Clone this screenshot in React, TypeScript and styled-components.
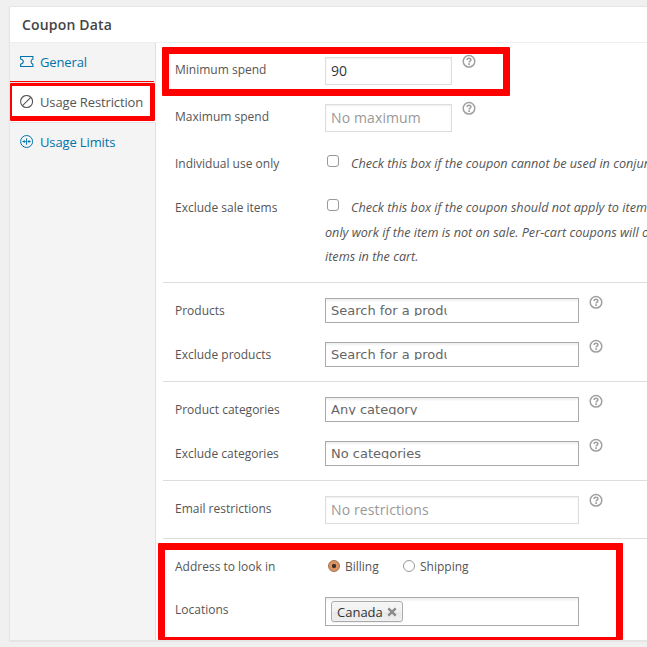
import React from "react";
import styled, { createGlobalStyle, css } from "styled-components";

const GlobalStyle = createGlobalStyle`
  *, *::before, *::after { box-sizing: border-box; }
  html, body { margin: 0; overflow: hidden; background: #f0f0f0; }
  body { font-family: "Open Sans", sans-serif; font-size: 12px; color: #555; }
`;

const Page = styled.div`
  height: 647px;
  width: 647px;
  padding: 6px 0 0 9px;
  overflow: hidden;
  position: relative;
`;

const Panel = styled.section`
  width: 700px;
  height: 635px;
  display: flex;
  flex-direction: column;
  background: #fff;
  border: 1px solid #e5e5e5;
  box-shadow: 0 1px 1px rgba(0, 0, 0, 0.04);
`;

const PanelHeader = styled.h2`
  margin: 0;
  height: 36px;
  padding-left: 12px;
  flex: none;
  border-bottom: 1px solid #eee;
  font-size: 14px;
  font-weight: 600;
  letter-spacing: 0.17px;
  line-height: 35px;
  color: #444;
`;

const PanelBody = styled.div`
  display: flex;
  flex: 1;
  min-height: 0;
`;

const Tabs = styled.nav`
  width: 146px;
  flex: none;
  background: #f4f4f4;
  border-right: 1px solid #dfdfdf;
`;

const Tab = styled.a<{ $active?: boolean }>`
  display: flex;
  align-items: center;
  gap: 6px;
  height: 40px;
  padding: 0 0 1px 10px;
  border-bottom: 1px solid #e3e3e3;
  font-size: 13px;
  letter-spacing: -0.13px;
  white-space: nowrap;
  color: #0073aa;
  &:last-child { border-bottom-color: transparent; }
  ${(p) =>
    p.$active &&
    css`
      margin-right: -1px;
      background: #fff;
      color: #555;
    `}
  svg { flex: none; }
`;

const Options = styled.div`
  flex: 1;
  padding-left: 7px;
  overflow: hidden;
`;

const Group = styled.div<{ $height: number }>`
  height: ${(p) => p.$height}px;
  padding: 8px 0 0 12px;
  border-bottom: 1px solid #ddd;
  &:first-child { padding-top: 7px; }
  &:last-child { border-bottom: 0; }
`;

const Row = styled.div<{ $height?: number }>`
  display: grid;
  grid-template-columns: 150px 1fr;
  height: ${(p) => p.$height ?? 44}px;
  padding-top: 7px;
`;

const Label = styled.label`
  line-height: 26px;
  white-space: nowrap;
`;

const Control = styled.div`
  display: flex;
  align-items: flex-start;
`;

const TextField = styled.input<{ $wide?: boolean }>`
  width: ${(p) => (p.$wide ? 254 : 127)}px;
  height: 28px;
  margin: 0;
  padding: 0 5px 2px;
  border: 1px solid #ddd;
  outline: 0;
  background: #fff;
  box-shadow: inset 0 1px 2px rgba(0, 0, 0, 0.07);
  font: 14px "Open Sans", sans-serif;
  letter-spacing: 0.12px;
  color: #32373c;
  &::placeholder { color: #999; opacity: 1; }
`;

const SelectField = styled.div<{ $tall?: boolean }>`
  width: 254px;
  height: ${(p) => (p.$tall ? 29 : 25)}px;
  padding: 3px 5px;
  border: 1px solid #aaa;
  background: linear-gradient(#eee 1%, #fff 15%);
`;

const SelectText = styled.div<{ $clipped?: boolean }>`
  height: 14px;
  width: ${(p) => (p.$clipped ? "116px" : "auto")};
  overflow: hidden;
  white-space: nowrap;
  font: 13px/17px "DejaVu Sans", sans-serif;
  color: #666;
`;

const Chip = styled.span`
  display: inline-flex;
  align-items: center;
  justify-content: space-between;
  width: 72px;
  height: 21px;
  padding: 1px 5px 0;
  border: 1px solid #aaa;
  border-radius: 3px;
  background: linear-gradient(#f4f4f4 20%, #f0f0f0 50%, #e8e8e8 52%, #eee);
  box-shadow: 0 0 2px #fff inset, 0 1px 0 rgba(0, 0, 0, 0.05);
  font-size: 13px;
  line-height: 19px;
  color: #333;
  svg { margin-bottom: 1px; }
`;

const Notes = styled.div`
  font-size: 12.65px;
  font-style: italic;
  color: #555;
  white-space: nowrap;
`;

const NoteLine = styled.div<{ $first?: boolean }>`
  display: flex;
  height: ${(p) => (p.$first ? 25 : 24)}px;
  line-height: 25px;
`;

const Checkbox = styled.input.attrs({ type: "checkbox" })`
  appearance: none;
  flex: none;
  width: 12px;
  height: 12px;
  margin: 4px 12px 0 2px;
  border: 1px solid #999;
  border-radius: 3px;
  background: #fff;
`;

const RadioOption = styled.label`
  display: flex;
  align-items: center;
  width: 75px;
  height: 24px;
  padding-left: 3px;
  gap: 5px;
`;

const Radio = styled.span<{ $checked?: boolean }>`
  width: 12px;
  height: 12px;
  border: 1px solid ${(p) => (p.$checked ? "#a5704d" : "#999")};
  border-radius: 50%;
  background: ${(p) =>
    p.$checked ? "radial-gradient(circle, #38322f 0 1.7px, #dd9262 2.5px)" : "#fff"};
`;

const Highlight = styled.div`
  position: absolute;
  border: 7px solid #f00;
  border-radius: 1px;
  pointer-events: none;
`;

const SpendHighlight = styled(Highlight)`
  left: 162px; top: 47px; width: 348px; height: 49px;
`;

const TabHighlight = styled(Highlight)`
  left: 10px; top: 83px; width: 145px; height: 38px;
  border-width: 3px 5px 5px 2px;
  &::before {
    content: "";
    position: absolute;
    left: -2px; top: -5px; width: 144px; height: 1px;
    background: #f00;
  }
`;

const LocationHighlight = styled(Highlight)`
  left: 158px; top: 543px; width: 465px; height: 97px;
  border-bottom-width: 3px;
`;

const HelpSvg = styled.svg`
  display: block;
  flex: none;
  margin: -3px 0 0 10px;
`;

const Help = () => (
  <HelpSvg width="14" height="14" viewBox="0 0 14 14" fill="none" stroke="#a0a0a0">
    <circle cx="7" cy="7.3" r="5.8" strokeWidth="1.5" />
    <path d="M5.1 6C5.1 3.7 8.9 3.7 8.9 5.8C8.9 7.1 7.1 7 7.1 8.4" strokeWidth="1.6" />
    <path d="M7.1 9.3v1.6" strokeWidth="1.7" />
  </HelpSvg>
);

const TicketIcon = () => (
  <svg width="14" height="14" viewBox="0 0 14 14" fill="none" stroke="currentColor" strokeWidth="1.1">
    <path d="M.6 1.5H12.9V4C10.4 4.8 10.4 8.4 12.9 9.2V11.5H.6V9.2C4.2 8.4 4.2 4.8 .6 4Z" />
  </svg>
);

const BlockIcon = () => (
  <svg width="14" height="14" viewBox="0 0 14 14" fill="none" stroke="currentColor" strokeWidth="1.1">
    <circle cx="6.6" cy="6.5" r="6" />
    <path d="M2.5 10.7L10.8 2.4" />
  </svg>
);

const LimitsIcon = () => (
  <svg width="14" height="14" viewBox="0 0 14 14" fill="none" stroke="currentColor" strokeWidth="1">
    <circle cx="6.6" cy="6.5" r="6" />
    <path d="M6.6 3.3v6.4M2.5 6.5h3M7.7 6.5h3" />
    <path d="M3.8 4.8L5.6 6.5L3.8 8.2ZM9.4 4.8L7.6 6.5L9.4 8.2Z" fill="currentColor" stroke="none" />
  </svg>
);

const RemoveIcon = () => (
  <svg width="10" height="10" viewBox="0 0 10 10" stroke="#8a8a8a" strokeWidth="2.4">
    <path d="M1.3 1.3L8.7 8.7M8.7 1.3L1.3 8.7" />
  </svg>
);

type SelectRowProps = { label: string; text: string; clipped?: boolean };

const SelectRow = ({ label, text, clipped }: SelectRowProps) => (
  <Row>
    <Label>{label}</Label>
    <Control>
      <SelectField>
        <SelectText $clipped={clipped}>{text}</SelectText>
      </SelectField>
      <Help />
    </Control>
  </Row>
);

export default function App() {
  return (
    <>
      <GlobalStyle />
      <Page>
        <Panel>
          <PanelHeader>Coupon Data</PanelHeader>
          <PanelBody>
            <Tabs>
              <Tab><TicketIcon />General</Tab>
              <Tab $active><BlockIcon />Usage Restriction</Tab>
              <Tab><LimitsIcon />Usage Limits</Tab>
            </Tabs>
            <Options>
              <Group $height={240}>
                <Row $height={47}>
                  <Label>Minimum spend</Label>
                  <Control><TextField defaultValue="90" /><Help /></Control>
                </Row>
                <Row $height={47}>
                  <Label>Maximum spend</Label>
                  <Control><TextField placeholder="No maximum" /><Help /></Control>
                </Row>
                <Row>
                  <Label>Individual use only</Label>
                  <Notes>
                    <NoteLine><Checkbox />Check this box if the coupon cannot be used in conjunction</NoteLine>
                  </Notes>
                </Row>
                <Row $height={87}>
                  <Label>Exclude sale items</Label>
                  <Notes>
                    <NoteLine $first><Checkbox />Check this box if the coupon should not apply to items</NoteLine>
                    <NoteLine>only work if the item is not on sale. Per-cart coupons will only</NoteLine>
                    <NoteLine>items in the cart.</NoteLine>
                  </Notes>
                </Row>
              </Group>
              <Group $height={99}>
                <SelectRow label="Products" text="Search for a product…" clipped />
                <SelectRow label="Exclude products" text="Search for a product…" clipped />
              </Group>
              <Group $height={99}>
                <SelectRow label="Product categories" text="Any category" />
                <SelectRow label="Exclude categories" text="No categories" />
              </Group>
              <Group $height={58}>
                <Row>
                  <Label>Email restrictions</Label>
                  <Control><TextField $wide placeholder="No restrictions" /><Help /></Control>
                </Row>
              </Group>
              <Group $height={101}>
                <Row $height={43}>
                  <Label>Address to look in</Label>
                  <Control>
                    <RadioOption><Radio $checked />Billing</RadioOption>
                    <RadioOption><Radio />Shipping</RadioOption>
                  </Control>
                </Row>
                <Row>
                  <Label>Locations</Label>
                  <Control>
                    <SelectField $tall>
                      <Chip>Canada<RemoveIcon /></Chip>
                    </SelectField>
                  </Control>
                </Row>
              </Group>
            </Options>
          </PanelBody>
        </Panel>
        <SpendHighlight />
        <TabHighlight />
        <LocationHighlight />
      </Page>
    </>
  );
}
